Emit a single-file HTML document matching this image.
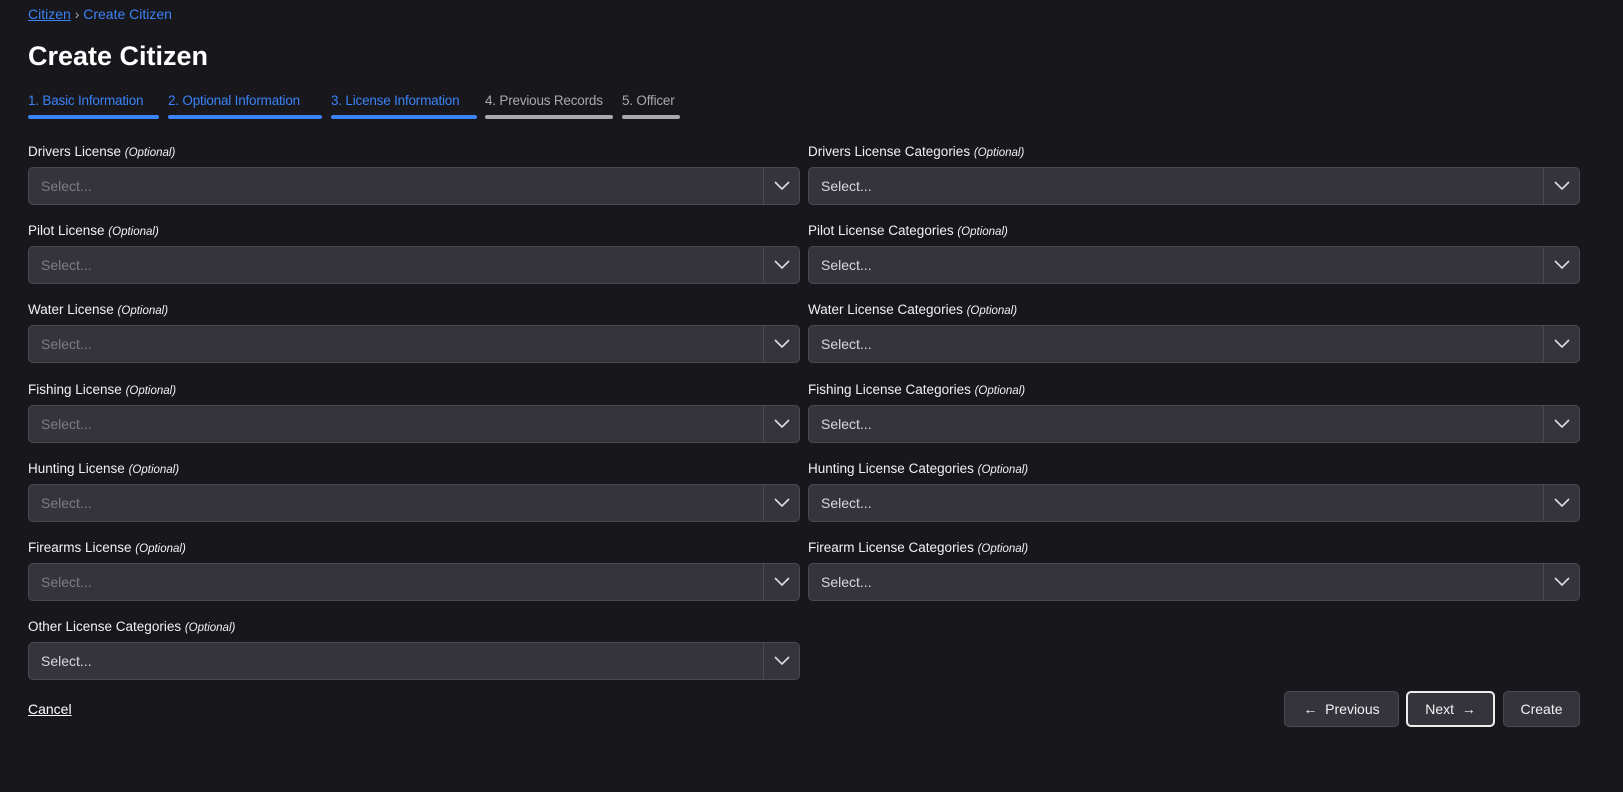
<!DOCTYPE html><html><head><style>
body{margin:0;background:#18171c;font-family:"Liberation Sans",sans-serif;color:#fff;width:1623px;height:792px;overflow:hidden;position:relative}
.a{position:absolute}
.lab{font-size:13.5px;color:#f2f2f2}
.lab i{font-size:11.5px}
.sel{position:absolute;height:38px;background:#35343c;border:1px solid #4b4a52;border-radius:5px;box-sizing:border-box}
.sel span{position:absolute;left:12px;top:10px;font-size:14px;color:#8b8a92}
.sel .ch{position:absolute;right:0;top:0;width:35px;height:36px;border-left:1px solid #4b4a52}
.sel svg{position:absolute;left:10px;top:12px}
.btn{position:absolute;top:691px;height:36px;background:#35343c;border:1px solid #4b4a52;border-radius:5px;box-sizing:border-box;font-size:14px;line-height:34px;text-align:center;color:#f2f2f2}
.step{position:absolute;top:93px;font-size:13.5px;letter-spacing:-0.2px}
.bar{position:absolute;top:115px;height:4px;border-radius:2px}
</style></head><body>
<div class="a" style="left:28px;top:6px;font-size:14px;color:#3b82f6"><u>Citizen</u> <span style="color:#aaa">›</span> <b style="font-weight:normal">Create Citizen</b></div>
<div class="a" style="left:28px;top:41px;font-size:27px;font-weight:bold">Create Citizen</div>
<div class="step" style="left:28px;color:#3b82f6">1. Basic Information</div><div class="bar" style="left:28px;width:131px;background:#3b82f6"></div>
<div class="step" style="left:168px;color:#3b82f6">2. Optional Information</div><div class="bar" style="left:168px;width:154px;background:#3b82f6"></div>
<div class="step" style="left:331px;color:#3b82f6">3. License Information</div><div class="bar" style="left:331px;width:146px;background:#3b82f6"></div>
<div class="step" style="left:485px;color:#a8a8ad">4. Previous Records</div><div class="bar" style="left:485px;width:128px;background:#a8a8ad"></div>
<div class="step" style="left:622px;color:#a8a8ad">5. Officer</div><div class="bar" style="left:622px;width:58px;background:#a8a8ad"></div>
<div id="f"></div>
<script>
var L=["Drivers License","Pilot License","Water License","Fishing License","Hunting License","Firearms License"],R=["Drivers License Categories","Pilot License Categories","Water License Categories","Fishing License Categories","Hunting License Categories","Firearm License Categories"];
var ch='<div class="ch"><svg width="16" height="11" viewBox="0 0 16 11"><path d="M1 2l7 7 7-7" stroke="#ddd" stroke-width="1.6" fill="none"/></svg></div>';
var h='';
function row(x,y,t,c){h+='<div class="a lab" style="left:'+x+'px;top:'+(y-23)+'px">'+t+' <i>(Optional)</i></div><div class="sel" style="left:'+x+'px;top:'+y+'px;width:772px"><span style="color:'+c+'">Select...</span>'+ch+'</div>';}
for(var i=0;i<6;i++){var y=167+i*79.2;row(28,y,L[i],'#7d7c84');row(808,y,R[i],'#d8d8dc');}
row(28,642,"Other License Categories",'#d8d8dc');
document.getElementById('f').innerHTML=h;
</script>
<div class="a" style="left:28px;top:701px;font-size:14px;text-decoration:underline">Cancel</div>
<div class="btn" style="left:1284px;width:115px">← &nbsp;Previous</div>
<div class="btn" style="left:1406px;width:89px;border:2px solid #eee;line-height:32px">Next &nbsp;→</div>
<div class="btn" style="left:1503px;width:77px">Create</div>
</body></html>
